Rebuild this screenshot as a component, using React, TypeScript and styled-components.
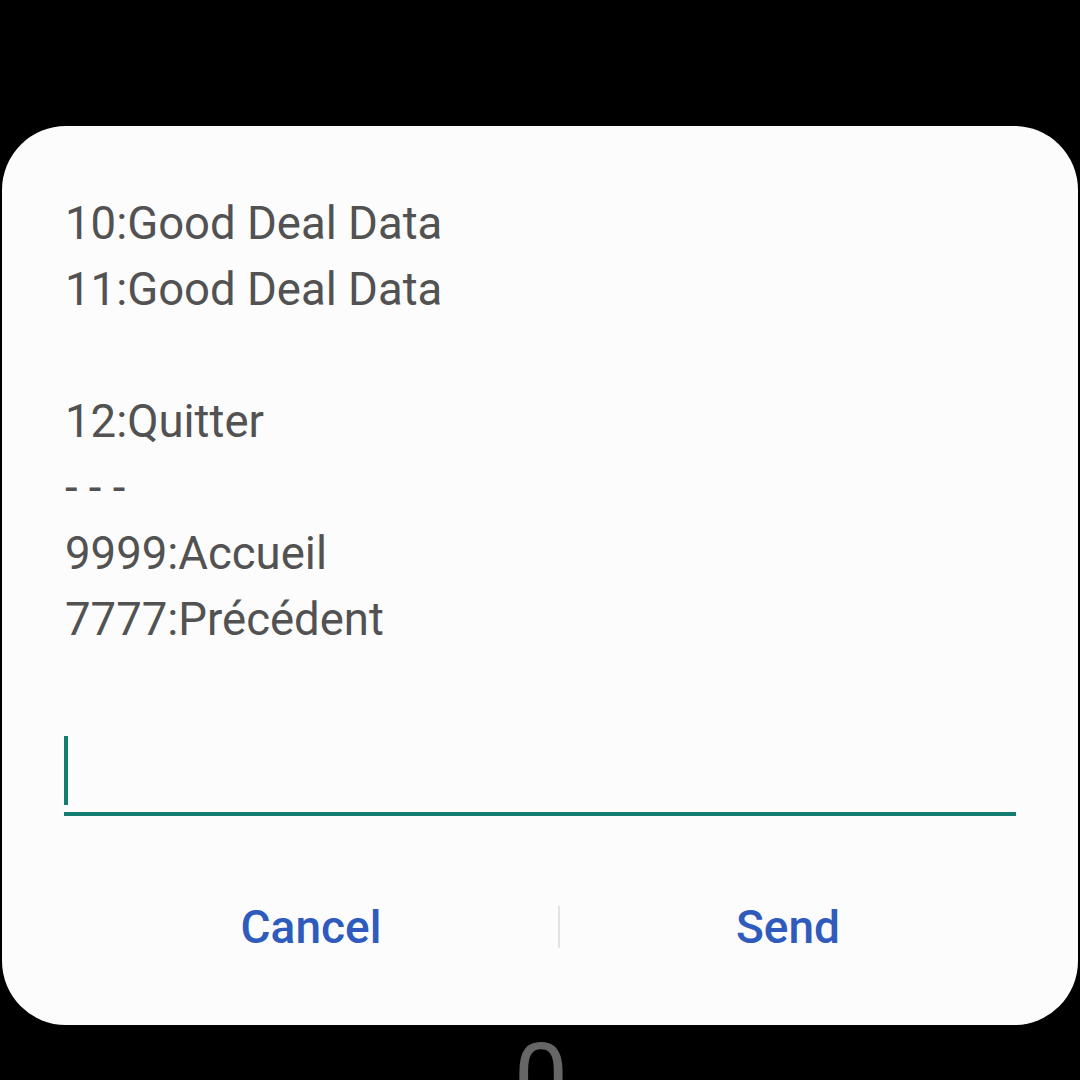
import styled, { createGlobalStyle } from "styled-components";

const GlobalStyle = createGlobalStyle`
  html, body {
    margin: 0;
    padding: 0;
    background: #000;
    height: 1080px;
    overflow: hidden;
  }
  body {
    font-family: Roboto, "Noto Sans", sans-serif;
  }
`;

const Screen = styled.div`
  width: 1080px;
  height: 1080px;
  display: flex;
  flex-direction: column;
  background: #000;
`;

const TopSpace = styled.div`
  height: 126px;
  flex: none;
`;

const Dialog = styled.div`
  height: 899px;
  margin: 0 2px;
  box-sizing: border-box;
  background: #fcfcfc;
  border-radius: 64px;
  padding: 65px 62px 0 62px;
  display: flex;
  flex-direction: column;
  flex: none;
`;

const Message = styled.div`
  font-size: 45.5px;
  line-height: 66px;
  color: #525252;
  padding-left: 1px;
`;

const Line = styled.div`
  height: 66px;
  white-space: pre;
`;

const InputField = styled.div`
  margin-top: 83px;
  height: 76px;
  border-bottom: 4px solid #127d70;
  display: flex;
  align-items: flex-start;
`;

const Cursor = styled.div`
  width: 4px;
  height: 69px;
  background: #127d70;
`;

const Buttons = styled.div`
  margin-top: 78px;
  display: grid;
  grid-template-columns: 494px 2px 1fr;
  align-items: center;
  height: 66px;
`;

const ActionButton = styled.button`
  border: none;
  background: none;
  padding: 0;
  font-family: Roboto, sans-serif;
  font-size: 46px;
  font-weight: 500;
  color: #2f5bbd;
  text-align: center;
  line-height: 66px;
`;

const Divider = styled.div`
  width: 2px;
  height: 42px;
  background: #e3e3e3;
`;

const Footer = styled.div`
  flex: 1;
  overflow: hidden;
  display: flex;
  justify-content: center;
  padding-top: 6px;
`;

const Digit = styled.span`
  font-size: 96px;
  line-height: 1;
  color: #666;
  margin-left: 2px;
`;

const lines = [
  "10:Good Deal Data",
  "11:Good Deal Data",
  "",
  "12:Quitter",
  "- - -",
  "9999:Accueil",
  "7777:Précédent",
];

export default function App() {
  return (
    <Screen>
      <GlobalStyle />
      <TopSpace />
      <Dialog>
        <Message>
          {lines.map((l, i) => (
            <Line key={i}>{l}</Line>
          ))}
        </Message>
        <InputField>
          <Cursor />
        </InputField>
        <Buttons>
          <ActionButton>Cancel</ActionButton>
          <Divider />
          <ActionButton>Send</ActionButton>
        </Buttons>
      </Dialog>
      <Footer>
        <Digit>0</Digit>
      </Footer>
    </Screen>
  );
}
